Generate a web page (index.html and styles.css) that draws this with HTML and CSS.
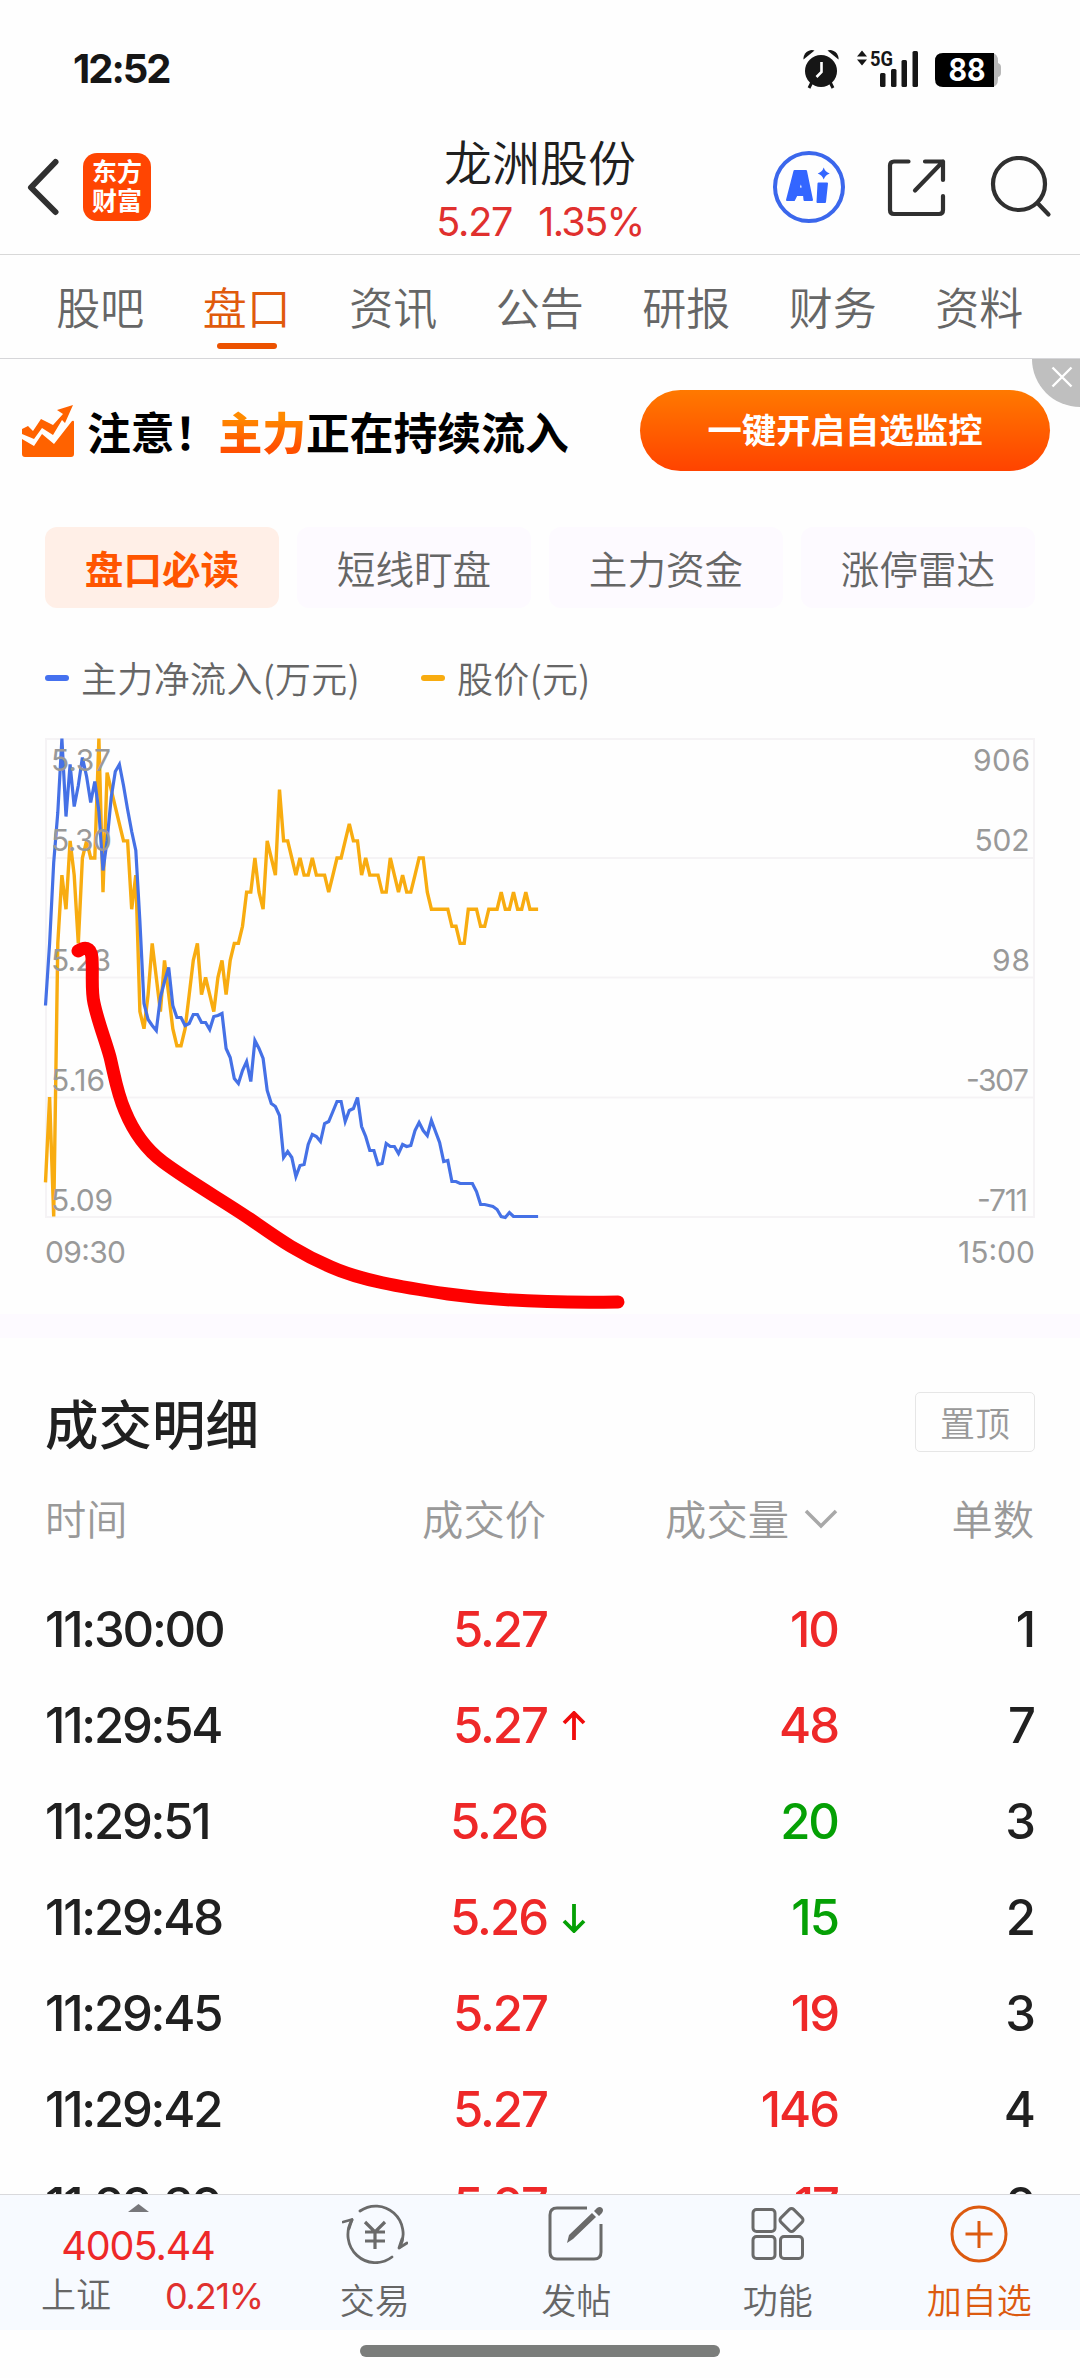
FILE: index.html
```html
<!DOCTYPE html>
<html lang="zh-CN">
<head>
<meta charset="utf-8">
<title>龙洲股份 盘口</title>
<link rel="stylesheet" href="styles.css">
</head>
<body>
<div class="app">
  <div class="status">
    <span class="clock num">12:52</span>
    <div class="status-icons">
      <svg width="36" height="40" viewBox="0 0 36 40"><g fill="#161616"><circle cx="18" cy="22" r="16"/><path d="M.5 10.500A8.500 8.500 0 0 1 11.500 1.500Z"/><path d="M35.500 10.500A8.500 8.500 0 0 0 24.500 1.500Z"/></g><path d="M9 33 6 39M27 33l3 6" stroke="#161616" stroke-width="3"/><path d="M18.500 13v10l-5 5" fill="none" stroke="#fff" stroke-width="2.600"/></svg>
      <svg class="signal" width="64" height="40" viewBox="0 0 64 40"><g fill="#161616"><path d="M0 7.500 5 1.500l5 6zM0 10.500l5 6 5-6z"/><text x="13" y="16.500" class="sig-text" textLength="23" lengthAdjust="spacingAndGlyphs">5G</text><rect x="23" y="24" width="5.500" height="14" rx="1.500"/><rect x="34" y="20" width="5.500" height="18" rx="1.500"/><rect x="44.500" y="11" width="5.500" height="27" rx="1.500"/><rect x="55.500" y="2" width="5.500" height="36" rx="1.500"/></g></svg>
      <svg class="battery" width="67" height="36" viewBox="0 0 67 36"><path d="M50 1h6q7 0 7 8v2q3 1 3 4v6q0 3-3 4v2q0 8-7 8h-6z" fill="#b8b8b8"/><path d="M8 1h51v34H8q-8 0-8-8V9q0-8 8-8z" fill="#000"/><text x="32" y="29" text-anchor="middle" class="bat-text" textLength="37" lengthAdjust="spacingAndGlyphs">88</text></svg>
    </div>
  </div>

  <header class="header">
    <div class="head-left">
      <svg width="32" height="58" viewBox="0 0 32 58"><path d="M28.500 4 4 29.500 28.500 54" fill="none" stroke="#303030" stroke-width="6" stroke-linecap="round" stroke-linejoin="round"/></svg>
      <div class="logo"><span>东方</span><span>财富</span></div>
    </div>
    <div class="head-mid">
      <h1>龙洲股份</h1>
      <div class="quote num"><span class="q1">5.27</span><span class="q2">1.35%</span></div>
    </div>
    <div class="head-right">
      <svg width="74" height="74" viewBox="0 0 74 74"><circle cx="37" cy="37" r="34" fill="none" stroke="#3b67ec" stroke-width="4"/><path fill="#3366ff" stroke="#3366ff" stroke-width="2" stroke-linejoin="round" fill-rule="evenodd" d="M22.500 21H34l6 29h-7.500l-.5-5h-7.500l-2.500 5h-7zm6.500 10-2.500 7.500h4.500zM46.500 33.500h8.500l-2 18.500h-7.500z"/><path fill="#3366ff" d="M51.700 17.500q1.500 4.500 6 6-4.500 1.500-6 6-1.500-4.500-6-6 4.500-1.500 6-6z"/></svg>
      <svg class="share" width="60" height="60" viewBox="0 0 60 60"><path d="M21.500 3.500H7q-4 0-4 4V52q0 4 4 4h45q4 0 4-4V38M38 3.500h18V22M56 3.500 28 32.500" fill="none" stroke="#303030" stroke-width="4.200" stroke-linecap="round" stroke-linejoin="round"/></svg>
      <svg class="search" width="62" height="62" viewBox="0 0 62 62"><ellipse cx="29" cy="28" rx="26" ry="26" fill="none" stroke="#303030" stroke-width="4.200"/><path d="m47.500 47 11 11.500" stroke="#303030" stroke-width="4.200" stroke-linecap="round"/></svg>
    </div>
  </header>

  <nav class="tabs">
    <span>股吧</span><span class="active">盘口</span><span>资讯</span><span>公告</span><span>研报</span><span>财务</span><span>资料</span>
  </nav>

  <section class="banner">
    <svg width="52" height="54" viewBox="0 0 52 54"><path fill="#ff6200" d="M0 24 6 21l5 5L19 14l12 6 10-11-6-4L51 0 43 18l-3-3-9 15-11-7-8 11L0 29zM0 34l12 7 8-12 12 10L50 16q2-1 2 1v32q0 3-3 3H3q-3 0-3-3z"/></svg>
    <p>注意！<b>主力</b>正在持续流入</p>
    <button>一键开启自选监控</button>
    <span class="close"><svg width="22" height="22" viewBox="0 0 22 22"><path d="m1.500 1.500 19 19M20.500 1.500l-19 19" stroke="#fff" stroke-width="2.400"/></svg></span>
  </section>

  <div class="chips"><span class="on">盘口必读</span><span>短线盯盘</span><span>主力资金</span><span>涨停雷达</span></div>

  <div class="legend"><i class="blue"></i><span>主力净流入(万元)</span><i class="gold"></i><span>股价(元)</span></div>

  <section class="chart">
    <svg width="1080" height="600" viewBox="0 714 1080 600">
      <g fill="none" stroke="#f5f3f5" stroke-width="2"><rect x="46" y="739" width="988" height="478"/><path d="M46 858h988M46 977.500h988M46 1097.500h988"/></g>
      <polyline id="price" fill="none" stroke="#f8ac10" stroke-width="3.400"/>
      <polyline id="flow" fill="none" stroke="#4571e6" stroke-width="3.200"/>
      <g class="axis">
        <text x="51" y="770.500" textLength="60">5.37</text><text x="51" y="850.500" textLength="61">5.30</text><text x="51" y="970.500" textLength="60">5.23</text><text x="51" y="1090.500" textLength="54">5.16</text><text x="51" y="1210.500" textLength="62">5.09</text>
        <text x="973" y="770.500" textLength="57">906</text><text x="974.500" y="850.500" textLength="55">502</text><text x="992" y="970.500" textLength="38">98</text><text x="966" y="1090.500" textLength="63">-307</text><text x="977" y="1210.500" textLength="51">-711</text>
        <text x="45" y="1262.500" textLength="81">09:30</text><text x="958" y="1262.500" textLength="77">15:00</text>
      </g>
      <path d="M78 951C84 947 91 946 92 958C93 975 91 990 94 1003C98 1022 105 1039 110 1057C115 1078 117 1093 125 1111C134 1133 147 1150 163 1162C190 1182 222 1200 250 1219C276 1237 296 1252 331 1267C360 1280 400 1287 448 1294C500 1301 560 1303 618 1302" fill="none" stroke="#fe0000" stroke-width="13" stroke-linecap="round"/>
    </svg>
  </section>

  <section class="deals">
    <div class="deals-head"><h2>成交明细</h2><span class="pin">置顶</span></div>
    <div class="row thead"><span>时间</span><span>成交价</span><span class="sort"></span><span>成交量</span><svg width="34" height="22" viewBox="0 0 34 22"><path d="m2 3 15 15L32 3" fill="none" stroke="#a8a8a8" stroke-width="3.500"/></svg><span>单数</span></div>
    <div class="row num"><span>11:30:00</span><span class="up">5.27</span><i></i><span class="up">10</span><span>1</span></div>
    <div class="row num"><span>11:29:54</span><span class="up">5.27</span><i><svg width="24" height="30" viewBox="0 0 24 30"><path d="M12 29V3M2 12 12 2l10 10" fill="none" stroke="#f00b0b" stroke-width="3.800"/></svg></i><span class="up">48</span><span>7</span></div>
    <div class="row num"><span>11:29:51</span><span class="up">5.26</span><i></i><span class="down">20</span><span>3</span></div>
    <div class="row num"><span>11:29:48</span><span class="up">5.26</span><i><svg width="24" height="30" viewBox="0 0 24 30"><path d="M12 1v26M2 18l10 10 10-10" fill="none" stroke="#05a005" stroke-width="3.800"/></svg></i><span class="down">15</span><span>2</span></div>
    <div class="row num"><span>11:29:45</span><span class="up">5.27</span><i></i><span class="up">19</span><span>3</span></div>
    <div class="row num"><span>11:29:42</span><span class="up">5.27</span><i></i><span class="up">146</span><span>4</span></div>
    <div class="row num"><span>11:29:39</span><span class="up">5.27</span><i></i><span class="up">17</span><span>2</span></div>
  </section>

  <footer class="bar">
    <div class="index">
      <svg width="21" height="8" viewBox="0 0 21 8"><path d="M0 8 10.500 0 21 8z" fill="#77777b"/></svg>
      <div class="points num">4005.44</div>
      <div class="index-row"><span>上证</span><span class="pct num">0.21%</span></div>
    </div>
    <div class="item"><svg width="66" height="60" viewBox="-33 -30 66 60"><g fill="none" stroke="#6a6a6a" stroke-width="2.800" stroke-linecap="round"><path d="M-15-23A27.500 28 0 0 1 25 13M17 23A27.500 28 0 0 1-23-14"/><path d="M-32-12l9-2.500-3 9M32 9l-8 5 3-9" stroke-linejoin="round"/><path d="M-10-12 0-2 10-12M-10-2h20M-10 7h20M0-2v17" stroke-width="3.200" stroke-linecap="butt"/></g></svg><span>交易</span></div>
    <div class="item"><svg width="56" height="60" viewBox="0 0 56 60"><path d="M39 4H9q-7 0-7 7v37q0 7 7 7h37q7 0 7-7V20" fill="none" stroke="#6a6a6a" stroke-width="3"/><path d="M19 39l2-8 23-22 4 4-23 22zM46 7l3-3q3-2 5 0t0 5l-3 3z" fill="#6a6a6a"/></svg><span>发帖</span></div>
    <div class="item"><svg width="54" height="60" viewBox="0 0 54 60"><g fill="none" stroke="#6a6a6a" stroke-width="3"><rect x="2" y="5.500" width="22" height="22" rx="3.500"/><rect x="2" y="32.500" width="22" height="22" rx="3.500"/><rect x="29.500" y="32.500" width="22" height="22" rx="3.500"/><rect x="31.500" y="7" width="18" height="18" rx="3" transform="rotate(45 40.500 16)"/></g></svg><span>功能</span></div>
    <div class="item add"><svg width="60" height="60" viewBox="0 0 60 60"><g fill="none" stroke="#dc5a10" stroke-width="3"><circle cx="30" cy="30" r="27"/><path d="M16.500 30h27M30 17v27"/></g></svg><span>加自选</span></div>
  </footer>
  <div class="home"><i></i></div>
</div>
<script src="chart.js"></script>
</body>
</html>
```
FILE: chart.js
```js
// One sample a minute, 09:30 to 11:30.
// price: cents below 5.37; flow: pixels below the top of the plot.
const price = [26,21,28,12,8,10,6,8,12,7,6,7,7,0,9,2,3,4,5,6,6,10,8,16,17,15,12,14,16,13,15,17,18,18,17,15,13,12,15,14,15,16,14,13,15,13,12,12,11,9,9,7,9,10,6,7,8,3,6,6,7,8,7,8,8,7,8,8,8,9,8,7,7,6,5,6,6,8,7,8,8,8,9,9,7,8,9,8,9,9,8,7,7,9,10,10,10,10,10,11,11,12,12,10,10,10,11,11,10,10,10,9,10,10,9,10,10,9,10,10,10];
const flow = [267,205,124,74,0,78,26,68,47,19,38,64,43,73,132,102,59,33,26,47,71,93,112,183,265,281,287,292,259,243,229,267,279,279,287,285,276,276,284,284,291,278,277,275,310,319,340,345,332,323,343,302,310,320,352,365,368,377,419,413,419,438,427,426,406,396,398,403,385,383,373,363,363,383,372,370,359,388,398,412,412,426,425,405,408,408,415,406,408,407,392,384,392,397,382,393,404,423,422,443,443,445,445,445,445,453,466,466,467,468,471,478,479,474,478,478,478,478,478,478,478];
const left = 45.5, top0 = 738.5, step = 4.105, cent = 478 / 28;
const line = (id, ys) => document.getElementById(id).setAttribute('points',
  ys.map((y, i) => (left + i * step).toFixed(1) + ',' + (top0 + y).toFixed(1)).join(' '));
line('price', price.map(v => v * cent));
line('flow', flow);
```
FILE: styles.css
```css
* { box-sizing: border-box; margin: 0; padding: 0; }
body { background: #fefefe; color: #202020; font-family: "Noto Sans CJK SC", sans-serif; }
.app { width: 1080px; height: 2378px; overflow: hidden; display: flex; flex-direction: column; }
.app > * { flex-shrink: 0; }
svg { display: block; flex-shrink: 0; }
i { font-style: normal; }
.num { font-family: Inter, "Noto Sans CJK SC", sans-serif; }

.status { height: 120px; padding: 48px 78px 0 73px; display: flex; justify-content: space-between; }
.clock { font-size: 40px; line-height: 42px; font-weight: 700; letter-spacing: -2px; color: #161616; }
.status-icons { display: flex; }
.status-icons > svg:first-child { margin-top: 1px; }
.signal { margin: 1px 0 0 18px; }
.battery { margin: 4px 0 0 14px; }
.sig-text { font: 700 21px Roboto, sans-serif; }
.bat-text { font: 700 31px Inter, sans-serif; fill: #fff; }

.header { height: 135px; border-bottom: 1px solid #d8d8d8; display: grid; grid-template-columns: 360px 360px 360px; }
.head-left { display: flex; padding: 38px 0 0 27px; gap: 24px; }
.logo { width: 68px; height: 68px; margin-top: -5px; border-radius: 14px; background: #ff4502; color: #fff; display: flex; flex-direction: column; align-items: center; justify-content: center; font-size: 25px; line-height: 29px; font-weight: 700; padding-bottom: 4px; }
.head-mid { text-align: center; padding-top: 11px; }
.head-mid h1 { font-size: 48px; line-height: 58px; font-weight: 350; }
.quote { display: flex; justify-content: center; gap: 26px; font-size: 39.5px; line-height: 48px; margin-top: 9px; color: #e0302e; }
.q1 { letter-spacing: -1.2px; }
.q2 { letter-spacing: -1.6px; }
.head-right { display: flex; padding: 30px 0 0 52px; }
.share { margin: 8px 0 0 41px; }
.search { margin: 6px 0 0 43px; }

.tabs { height: 104px; padding: 0 27px; border-bottom: 1px solid #d6d6d9; display: grid; grid-template-columns: repeat(7, 146.5px); font-size: 44px; line-height: 102px; font-weight: 350; text-align: center; color: #666; }
.tabs .active { color: #e05a0c; display: flex; flex-direction: column; align-items: center; }
.tabs .active::after { content: ""; width: 60px; height: 6px; border-radius: 3px; background: #ec5200; margin-top: -14px; }

.banner { height: 168px; padding: 31px 30px 0 22px; display: flex; position: relative; }
.banner > svg { margin-top: 15px; }
.banner p { margin-left: 13px; width: 553px; font-size: 43.8px; line-height: 82px; font-weight: 700; color: #000; white-space: nowrap; }
.banner b { background: linear-gradient(#ff8a00 30%, #ff5000 75%); -webkit-background-clip: text; background-clip: text; color: transparent; }
.banner button { width: 410px; height: 81px; border: 0; border-radius: 41px; background: linear-gradient(#ff7900, #ff4300); color: #fff; font: 700 34.4px/76px "Noto Sans CJK SC", sans-serif; padding-bottom: 5px; }
.close { position: absolute; right: 0; top: 0; width: 48px; height: 48px; border-bottom-left-radius: 48px; background: #bfbfbf; padding: 7px 0 0 19px; }

.chips { height: 81px; padding: 0 45px; display: flex; gap: 18px; font-size: 38.6px; line-height: 80px; font-weight: 350; text-align: center; color: #666; }
.chips span { width: 234px; border-radius: 12px; background: #fdfaff; }
.chips .on { background: #ffefe7; color: #ff5500; font-weight: 700; }

.legend { height: 106px; padding: 40px 45px 0; display: flex; align-items: flex-start; font-size: 36px; line-height: 58px; letter-spacing: .35px; font-weight: 350; color: #666; }
.legend i { width: 24px; height: 6px; border-radius: 3px; margin: 27px 12px 0 0; }
.legend .blue { background: #4571ef; }
.legend .gold { background: #f8ac10; margin-left: 61px; }

.chart { height: 600px; }
.axis { font: 400 30px Inter, sans-serif; fill: #999; }

.deals { height: 880px; padding: 0 46px 0 45px; overflow: hidden; border-top: 24px solid #fdfaff; }
.deals-head { display: flex; justify-content: space-between; align-items: center; height: 60px; margin-top: 54px; }
.deals-head h2 { font-size: 53.5px; line-height: 60px; font-weight: 500; }
.pin { width: 120px; height: 60px; border: 1.5px solid #e6e6e6; border-radius: 5px; text-align: center; font-size: 35px; line-height: 57px; font-weight: 350; color: #999; margin-right: -1px; }
.row { height: 96px; display: grid; grid-template-columns: 241px 261px 58px 233px 196px; align-items: center; font-size: 49px; line-height: 96px; font-weight: 450; letter-spacing: -2px; text-align: right; }
.row > :first-child { text-align: left; }
.row.num > :first-child { letter-spacing: -2.2px; }
.row i { padding-left: 15px; }
.thead { height: 130px; line-height: 131px; grid-template-columns: 241px 260px 59px 184px 49px 196px; font-size: 41.3px; font-weight: 350; letter-spacing: 0; color: #999; }
.thead svg { justify-self: end; margin: 2px 0 0; }
.up { color: #ee2828; }
.down { color: #05a005; }

.bar { height: 136px; background: #f7faff; border-top: 1px solid #d9d9dc; display: grid; grid-template-columns: 274px repeat(4, 1fr); }
.index { display: flex; flex-direction: column; align-items: center; padding-top: 9px; color: #666; }
.index > svg { margin-left: 2px; }
.points { font-size: 39.5px; line-height: 44px; margin-top: 12px; letter-spacing: -1px; color: #ee2828; margin-left: 2px; }
.index-row { display: flex; justify-content: space-between; width: 222px; margin-left: 30px; font-size: 35px; line-height: 44px; margin-top: 3px; font-weight: 350; }
.pct { font-size: 36px; letter-spacing: -1.2px; color: #e0302e; font-weight: 400; line-height: 50px; }
.item { display: flex; flex-direction: column; align-items: center; padding-top: 9px; font-size: 35px; line-height: 44px; font-weight: 350; color: #666; gap: 13px; }
.add { color: #dc5a10; }
.home { height: 48px; display: flex; justify-content: center; padding-top: 15px; }
.home i { width: 360px; height: 12px; border-radius: 6px; background: #7b7d7b; }
```
